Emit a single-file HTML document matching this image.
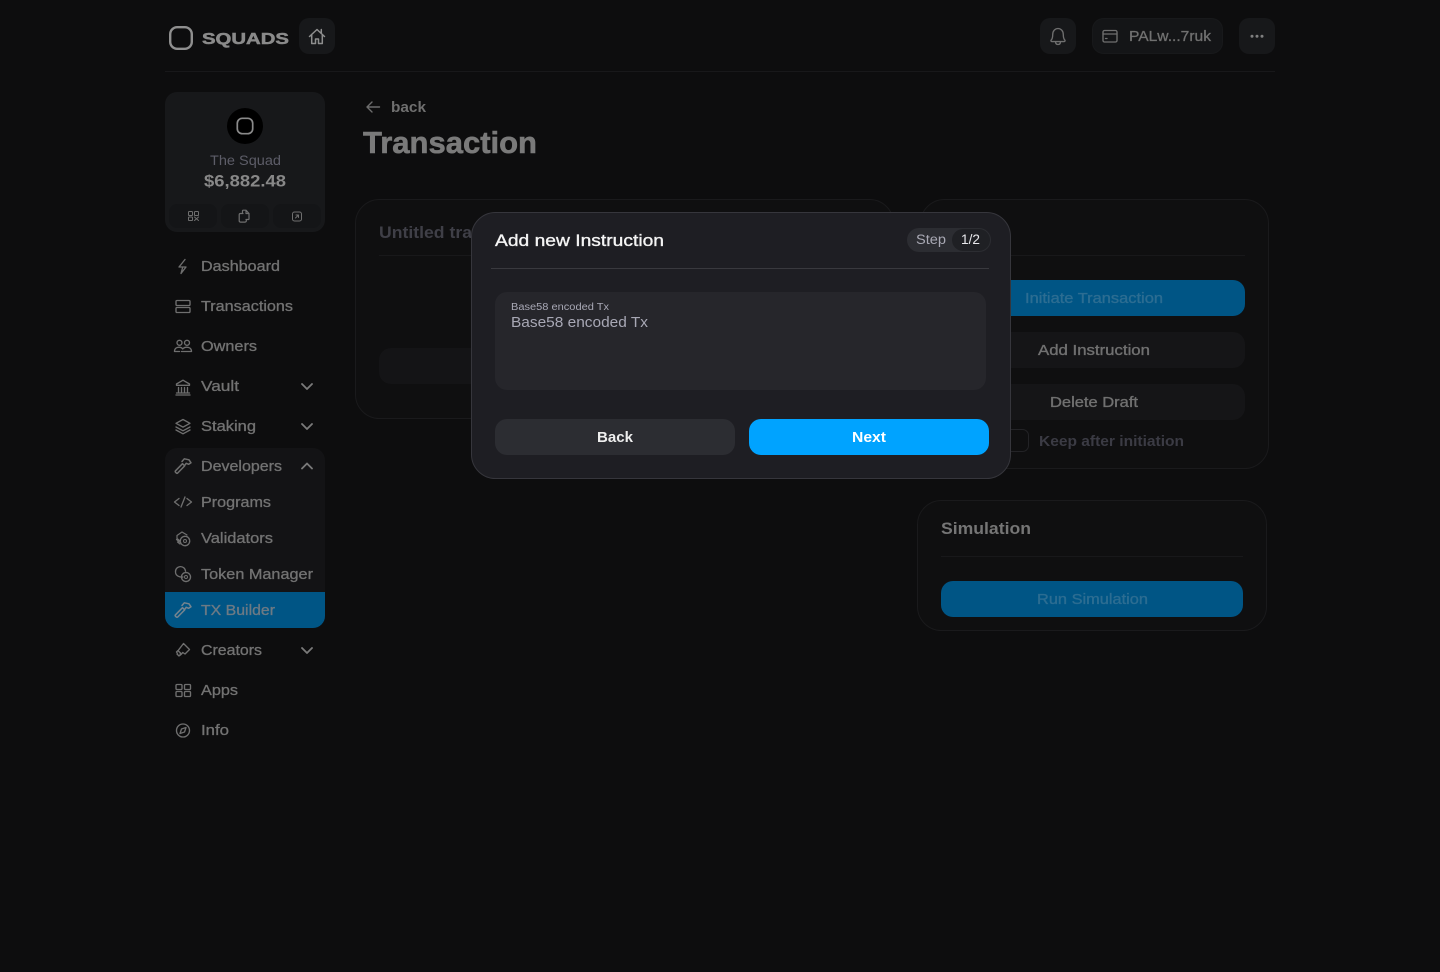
<!DOCTYPE html>
<html><head><meta charset="utf-8"><title>Transaction</title>
<style>
html,body{margin:0;padding:0;background:#0d0d0e;width:1440px;height:972px;overflow:hidden}
svg{display:block}
text{font-family:"Liberation Sans",sans-serif;}
.m{stroke-width:.3px}
.b{font-weight:bold}
.nav{font-size:15px;fill:#727272;stroke:#727272;stroke-width:.32px}
.ic{fill:none;stroke:#6f6f6f;stroke-width:1.35;stroke-linecap:round;stroke-linejoin:round}
</style></head><body>
<svg width="1440" height="972" viewBox="0 0 1440 972" xmlns="http://www.w3.org/2000/svg">
<rect width="1440" height="972" fill="#0d0d0e"/>
<!-- header -->
<rect x="165" y="71" width="1110" height="1" fill="#18181a"/>
<g fill="none" stroke="#8f8f8f">
<rect x="170.200" y="27.200" width="21.600" height="21.600" rx="7" stroke-width="2.400"/>
</g>
<text x="202" y="44" class="b" font-size="15.500" fill="#8a8a8a" stroke="#8a8a8a" stroke-width=".5" textLength="87" lengthAdjust="spacingAndGlyphs">SQUADS</text>
<rect x="299" y="18" width="36" height="36" rx="10" fill="#17181a"/>
<path fill="none" stroke="#8e8e8e" stroke-width="1.500" stroke-linecap="round" stroke-linejoin="round" d="M309.500 36.500 317 29.500l7.500 7M311.700 35V43.500h3.800v-4.500h3v4.500h3.800V35M321.300 33v-3.500"/>
<rect x="1040" y="18" width="36" height="36" rx="10" fill="#17181a"/>
<path class="ic" d="M1051.200 40c1.200-1.200 1.500-2.700 1.500-5.300 0-3.700 2.300-6.200 5.300-6.200s5.300 2.500 5.300 6.200c0 2.600.3 4.100 1.500 5.300 .6.600 .2 1.600-.7 1.600h-12.200c-.9 0-1.300-1-.7-1.600zM1055.500 41.700c.1 1.800 1.200 2.800 2.500 2.800s2.400-1 2.500-2.800"/>
<rect x="1092.500" y="18.500" width="130" height="35" rx="11" fill="#141517" stroke="#18191b"/>
<rect x="1103" y="30.500" width="14" height="11.500" rx="1.500" class="ic"/>
<path class="ic" d="M1103 34h14M1105.500 38.500h1.500"/>
<text x="1129" y="41" font-size="14.500" class="m" fill="#707070" stroke="#707070" textLength="82" lengthAdjust="spacingAndGlyphs">PALw...7ruk</text>
<rect x="1239" y="18" width="36" height="36" rx="10" fill="#17181a"/>
<g fill="#7f7f7f"><circle cx="1252" cy="36.300" r="1.500"/><circle cx="1257" cy="36.300" r="1.500"/><circle cx="1262" cy="36.300" r="1.500"/></g>

<!-- squad card -->
<rect x="165" y="92" width="160" height="140" rx="12" fill="#17181a"/>
<circle cx="245" cy="126" r="18" fill="#000"/>
<rect x="237.300" y="118.300" width="15.400" height="15.400" rx="5" fill="none" stroke="#8a8a8a" stroke-width="1.700"/>
<text x="210" y="165" font-size="13.500" fill="#5d5d68" textLength="71" lengthAdjust="spacingAndGlyphs">The Squad</text>
<text x="204" y="186.500" font-size="17" class="b" fill="#888" textLength="82" lengthAdjust="spacingAndGlyphs">$6,882.48</text>
<rect x="169" y="204" width="48" height="24" rx="8" fill="#141517"/>
<rect x="221" y="204" width="48" height="24" rx="8" fill="#141517"/>
<rect x="273" y="204" width="48" height="24" rx="8" fill="#141517"/>
<g class="ic" style="stroke-width:1">
<rect x="188.500" y="211.500" width="4" height="4" rx=".8"/><rect x="194.500" y="211.500" width="4" height="4" rx=".8"/><rect x="188.500" y="217" width="4" height="3.500" rx=".8"/><path d="M194.500 217l4 3.500M198.500 217l-4 3.500"/>
<path style="stroke-width:1.200" d="M243 213.500h-2.500c-.8 0-1.300.5-1.300 1.300v6c0 .8.500 1.300 1.300 1.300h4.500c.8 0 1.300-.5 1.300-1.300v-1.300M242.500 213v-2c0-.5.400-.8.800-.8h2.700l3 3.300v5.200c0 .5-.4.800-.8.800h-2.200M246 210.500v3h3"/>
<rect x="292.500" y="212" width="9" height="9" rx="2"/><path d="M295.500 218l3-3M296 215h2.500v2.500"/>
</g>

<!-- nav -->
<rect x="165" y="448" width="160" height="180" rx="12" fill="#131315"/>
<path d="M165 592H325V616a12 12 0 0 1-12 12H177a12 12 0 0 1-12-12Z" fill="#005585"/>
<g>
<text x="201" y="271" class="nav" textLength="79" lengthAdjust="spacingAndGlyphs">Dashboard</text>
<text x="201" y="311" class="nav" textLength="92" lengthAdjust="spacingAndGlyphs">Transactions</text>
<text x="201" y="351" class="nav" textLength="56" lengthAdjust="spacingAndGlyphs">Owners</text>
<text x="201" y="391" class="nav" textLength="38" lengthAdjust="spacingAndGlyphs">Vault</text>
<text x="201" y="431" class="nav" textLength="55" lengthAdjust="spacingAndGlyphs">Staking</text>
<text x="201" y="471" class="nav" textLength="81" lengthAdjust="spacingAndGlyphs">Developers</text>
<text x="201" y="507" class="nav" textLength="70" lengthAdjust="spacingAndGlyphs">Programs</text>
<text x="201" y="543" class="nav" textLength="72" lengthAdjust="spacingAndGlyphs">Validators</text>
<text x="201" y="579" class="nav" textLength="112" lengthAdjust="spacingAndGlyphs">Token Manager</text>
<text x="201" y="615" class="nav" style="fill:#6d7a84;stroke:#6d7a84" textLength="74" lengthAdjust="spacingAndGlyphs">TX Builder</text>
<text x="201" y="655" class="nav" textLength="61" lengthAdjust="spacingAndGlyphs">Creators</text>
<text x="201" y="695" class="nav" textLength="37" lengthAdjust="spacingAndGlyphs">Apps</text>
<text x="201" y="735" class="nav" textLength="28" lengthAdjust="spacingAndGlyphs">Info</text>
</g>
<g class="ic">
<!-- bolt -->
<path d="M185 259.500l-6 7.500h7l-5 6.500 1.500-5.500"/>
<!-- transactions -->
<rect x="176" y="300.500" width="14" height="5" rx="1"/><rect x="176" y="307.500" width="14" height="5" rx="1"/>
<!-- owners -->
<circle cx="179.500" cy="342.800" r="2.500"/><circle cx="187" cy="342.800" r="2.500"/>
<path d="M174.500 351.500c0-2.800 2-4.300 4.500-4.300 1.800 0 3 .7 3.800 1.800M181.500 351.500h10c0-2.800-2-4.300-4.800-4.300-1.200 0-2.300.3-3.200 1M174.500 351.500h5"/>
<!-- vault -->
<path d="M176.500 384l6.500-3.800 6.500 3.800v1.300h-13zM178.500 387.500v5M181.500 387.500v5M184.500 387.500v5M187.500 387.500v5M176.500 393h13"/>
<path d="M176 395h14"/>
<!-- staking -->
<path d="M183 419.500l7 3.800-7 3.800-7-3.800zM176 427l7 3.800 7-3.800M176 430l7 3.800 7-3.800"/>
<!-- hammer developers -->
<path style="stroke-width:1.500" d="M176.300 473l-.8-.800c-.4-.4-.4-1 0-1.400l7-7.100 2.200 2.200-7 7.100c-.4.400-1 .4-1.400 0zM182 461.500l2.300-2.700 4.700 1 2 3-2.300 1.500-2.500-1-1.200 1.700"/>
<!-- code -->
<path d="M179 498.500l-4.500 3.500 4.500 3.500M187 498.500l4.500 3.500-4.500 3.500M185 497l-4 10"/>
<!-- validators -->
<path style="stroke-width:1.200" d="M177 535.500l5-3.500 5 3M177 535.500v3l2.500 2M176.500 539.500l3 2.500M177.500 542l2.500 2"/>
<circle cx="185" cy="541" r="4.700" stroke-dasharray="2 .9" style="stroke-width:1.400"/><circle cx="185" cy="541" r="1.500" style="stroke-width:1"/>
<!-- token -->
<path style="stroke-width:1.300" d="M183 577c-3 .4-7.500-1-7.500-5a5 5 0 0 1 10-.8"/>
<circle cx="186" cy="577" r="4.500" stroke-dasharray="2 .9" style="stroke-width:1.400"/><circle cx="186" cy="577" r="1.500" style="stroke-width:1"/>
<!-- tx builder hammer -->
<path style="stroke:#75848f;stroke-width:1.500" d="M176.300 617l-.8-.800c-.4-.4-.4-1 0-1.400l7-7.100 2.200 2.200-7 7.100c-.4.400-1 .4-1.400 0zM182 605.500l2.300-2.700 4.700 1 2 3-2.300 1.500-2.500-1-1.200 1.700"/>
<!-- creators brush -->
<path d="M183.500 643.500l6 6-4.500 4.500-2.200-1.500-1.800 2-1 .5.500-2-2.500-2.300zM178 650.500l-1.500 1.500 1 1M177 654l2 2 1.500-1"/>
<!-- apps -->
<rect x="176" y="684.500" width="6" height="5" rx="1"/><rect x="184.500" y="684.500" width="6" height="5" rx="1"/><rect x="176" y="691.500" width="6" height="5" rx="1"/><rect x="184.500" y="691.500" width="6" height="5" rx="1"/>
<!-- info compass -->
<circle cx="183" cy="730.500" r="6.500"/><path d="M186 727.500l-1.500 4.500-4.500 1.500 1.500-4.500z"/>
<!-- chevrons -->
<path style="stroke-width:1.800;stroke:#7a7a7a" d="M302 384l5 5 5-5M302 424l5 5 5-5M302 468.500l5-5 5 5M302 648l5 5 5-5"/>
</g>

<!-- back & title -->
<path d="M379.500 107h-12.500M372 102l-5 5 5 5" fill="none" stroke="#6d6d6d" stroke-width="1.400" stroke-linecap="round" stroke-linejoin="round"/>
<text x="391" y="112" class="b" font-size="15" fill="#6f6f6f" textLength="35" lengthAdjust="spacingAndGlyphs">back</text>
<text x="363" y="153" class="b" font-size="31" fill="#7a7a7a" stroke="#7a7a7a" stroke-width=".6" textLength="174" lengthAdjust="spacingAndGlyphs">Transaction</text>

<!-- left card -->
<rect x="355.500" y="199.500" width="538" height="219" rx="24" fill="#0f0f10" stroke="#1a1a1c"/>
<text x="379" y="238" class="b" font-size="17" fill="#3f3f47" textLength="93" lengthAdjust="spacingAndGlyphs">Untitled tra</text>
<rect x="379" y="255" width="300" height="1" fill="#18181a"/>
<rect x="379" y="348" width="300" height="36" rx="12" fill="#141416"/>

<!-- right card -->
<rect x="920.500" y="199.500" width="348" height="269" rx="24" fill="#0f0f10" stroke="#1a1a1c"/>
<rect x="943" y="255" width="302" height="1" fill="#18181a"/>
<rect x="943" y="280" width="302" height="36" rx="12" fill="#005585"/>
<text x="1025" y="303" font-size="14.500" fill="#2c6d92" stroke="#2c6d92" stroke-width=".35" textLength="138" lengthAdjust="spacingAndGlyphs">Initiate Transaction</text>
<rect x="943" y="332" width="302" height="36" rx="12" fill="#151517"/>
<text x="1038" y="355" font-size="14.500" fill="#707070" stroke="#707070" stroke-width=".35" textLength="112" lengthAdjust="spacingAndGlyphs">Add Instruction</text>
<rect x="943" y="384" width="302" height="36" rx="12" fill="#151517"/>
<text x="1050" y="407" font-size="14.500" fill="#707070" stroke="#707070" stroke-width=".35" textLength="88" lengthAdjust="spacingAndGlyphs">Delete Draft</text>
<rect x="1000.500" y="429.500" width="28" height="22" rx="6" fill="none" stroke="#232326"/>
<text x="1039" y="446" class="b" font-size="14.500" fill="#3b3b44" textLength="145" lengthAdjust="spacingAndGlyphs">Keep after initiation</text>

<!-- simulation -->
<rect x="917.500" y="500.500" width="349" height="130" rx="24" fill="#0f0f10" stroke="#1a1a1c"/>
<text x="941" y="534" class="b" font-size="17" fill="#757575" textLength="90" lengthAdjust="spacingAndGlyphs">Simulation</text>
<rect x="941" y="556" width="302" height="1" fill="#18181a"/>
<rect x="941" y="581" width="302" height="36" rx="12" fill="#005585"/>
<text x="1037" y="604" font-size="14.500" fill="#2c6d92" stroke="#2c6d92" stroke-width=".35" textLength="111" lengthAdjust="spacingAndGlyphs">Run Simulation</text>

<!-- modal -->
<rect x="471.500" y="212.500" width="539" height="266" rx="24" fill="#1e1e23" stroke="#36363c"/>
<text x="495" y="246" font-size="17" fill="#f4f4f4" stroke="#f4f4f4" stroke-width=".35" textLength="169" lengthAdjust="spacingAndGlyphs">Add new Instruction</text>
<rect x="907" y="228" width="84" height="24" rx="12" fill="#2c2d32"/>
<rect x="952" y="229" width="38" height="22" rx="11" fill="#1f2024"/>
<text x="916" y="244" font-size="13.500" fill="#a9a9b4" textLength="30" lengthAdjust="spacingAndGlyphs">Step</text>
<text x="961" y="244" font-size="13.500" fill="#e8e8ec" textLength="19" lengthAdjust="spacingAndGlyphs">1/2</text>
<rect x="491" y="268" width="498" height="1" fill="#39393e"/>
<rect x="495" y="292" width="491" height="98" rx="12" fill="#26262b"/>
<text x="511" y="310" font-size="10" fill="#a8a8b5" textLength="98" lengthAdjust="spacingAndGlyphs">Base58 encoded Tx</text>
<text x="511" y="327" font-size="15" fill="#a8a8b5" textLength="137" lengthAdjust="spacingAndGlyphs">Base58 encoded Tx</text>
<rect x="495" y="419" width="240" height="36" rx="12" fill="#2c2d32"/>
<text x="597" y="442" class="b" font-size="14.500" fill="#eee" textLength="36" lengthAdjust="spacingAndGlyphs">Back</text>
<rect x="749" y="419" width="240" height="36" rx="12" fill="#00a3ff"/>
<text x="852" y="442" class="b" font-size="14.500" fill="#fff" textLength="34" lengthAdjust="spacingAndGlyphs">Next</text>
</svg>
</body></html>
